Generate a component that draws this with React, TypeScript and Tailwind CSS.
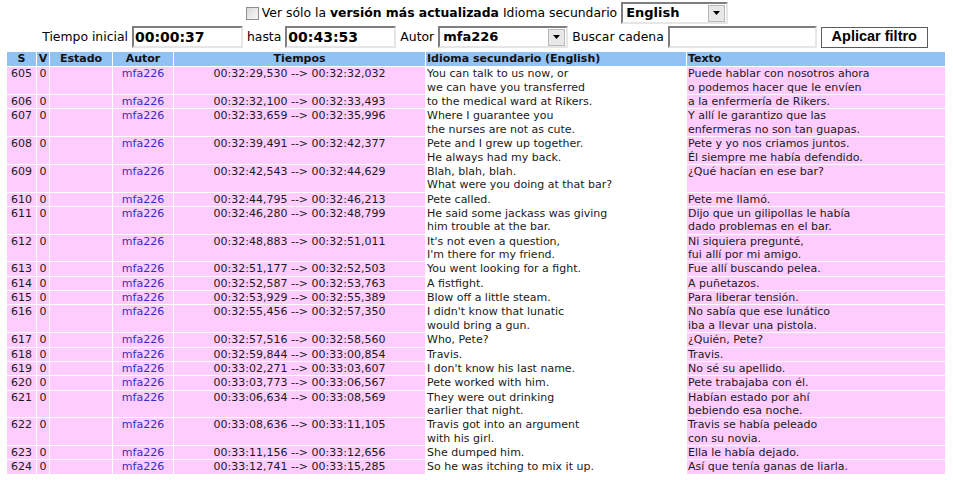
import React from "react";

type Row = { s: string; t: string; en: string[]; es: string[] };

const rows: Row[] = [
  { s: "605", t: "00:32:29,530 --> 00:32:32,032", en: ["You can talk to us now, or", "we can have you transferred"], es: ["Puede hablar con nosotros ahora", "o podemos hacer que le envíen"] },
  { s: "606", t: "00:32:32,100 --> 00:32:33,493", en: ["to the medical ward at Rikers."], es: ["a la enfermería de Rikers."] },
  { s: "607", t: "00:32:33,659 --> 00:32:35,996", en: ["Where I guarantee you", "the nurses are not as cute."], es: ["Y allí le garantizo que las", "enfermeras no son tan guapas."] },
  { s: "608", t: "00:32:39,491 --> 00:32:42,377", en: ["Pete and I grew up together.", "He always had my back."], es: ["Pete y yo nos criamos juntos.", "Él siempre me había defendido."] },
  { s: "609", t: "00:32:42,543 --> 00:32:44,629", en: ["Blah, blah, blah.", "What were you doing at that bar?"], es: ["¿Qué hacían en ese bar?"] },
  { s: "610", t: "00:32:44,795 --> 00:32:46,213", en: ["Pete called."], es: ["Pete me llamó."] },
  { s: "611", t: "00:32:46,280 --> 00:32:48,799", en: ["He said some jackass was giving", "him trouble at the bar."], es: ["Dijo que un gilipollas le había", "dado problemas en el bar."] },
  { s: "612", t: "00:32:48,883 --> 00:32:51,011", en: ["It's not even a question,", "I'm there for my friend."], es: ["Ni siquiera pregunté,", "fui allí por mi amigo."] },
  { s: "613", t: "00:32:51,177 --> 00:32:52,503", en: ["You went looking for a fight."], es: ["Fue allí buscando pelea."] },
  { s: "614", t: "00:32:52,587 --> 00:32:53,763", en: ["A fistfight."], es: ["A puñetazos."] },
  { s: "615", t: "00:32:53,929 --> 00:32:55,389", en: ["Blow off a little steam."], es: ["Para liberar tensión."] },
  { s: "616", t: "00:32:55,456 --> 00:32:57,350", en: ["I didn't know that lunatic", "would bring a gun."], es: ["No sabía que ese lunático", "iba a llevar una pistola."] },
  { s: "617", t: "00:32:57,516 --> 00:32:58,560", en: ["Who, Pete?"], es: ["¿Quién, Pete?"] },
  { s: "618", t: "00:32:59,844 --> 00:33:00,854", en: ["Travis."], es: ["Travis."] },
  { s: "619", t: "00:33:02,271 --> 00:33:03,607", en: ["I don't know his last name."], es: ["No sé su apellido."] },
  { s: "620", t: "00:33:03,773 --> 00:33:06,567", en: ["Pete worked with him."], es: ["Pete trabajaba con él."] },
  { s: "621", t: "00:33:06,634 --> 00:33:08,569", en: ["They were out drinking", "earlier that night."], es: ["Habían estado por ahí", "bebiendo esa noche."] },
  { s: "622", t: "00:33:08,636 --> 00:33:11,105", en: ["Travis got into an argument", "with his girl."], es: ["Travis se había peleado", "con su novia."] },
  { s: "623", t: "00:33:11,156 --> 00:33:12,656", en: ["She dumped him."], es: ["Ella le había dejado."] },
  { s: "624", t: "00:33:12,741 --> 00:33:15,285", en: ["So he was itching to mix it up."], es: ["Así que tenía ganas de liarla."] },
];

function Lines({ lines }: { lines: string[] }) {
  return (
    <>
      {lines.map((l, i) => (
        <div key={i} className="whitespace-nowrap">
          {l}
        </div>
      ))}
    </>
  );
}

function Arrow() {
  return (
    <span className="flex h-[17px] w-[17px] items-center justify-center border border-[#b9b9b9] bg-[#e8e8e8]">
      <svg width="7" height="4" viewBox="0 0 7 4">
        <polygon points="0,0 7,0 3.5,4" fill="#000" />
      </svg>
    </span>
  );
}

function FakeSelect({ value, width }: { value: string; width: string }) {
  return (
    <span
      className={`flex h-[22px] ${width} items-center justify-between border-2 border-t-[#7f7f7f] border-l-[#7f7f7f] border-b-[#e6e6e6] border-r-[#e6e6e6] bg-white pl-[3px] pr-px`}
    >
      <span className="text-[13px] font-bold text-black">{value}</span>
      <Arrow />
    </span>
  );
}

function FakeInput({ value, width }: { value: string; width: string }) {
  return (
    <span
      className={`flex h-[22px] ${width} items-center border-2 border-t-[#7f7f7f] border-l-[#7f7f7f] border-b-[#e6e6e6] border-r-[#e6e6e6] bg-white pl-[1px]`}
    >
      <span className="text-[14px] font-bold text-black">{value}</span>
    </span>
  );
}

export default function App() {
  const td = "px-px align-top bg-[#ffccff]";
  const th = "px-px pb-px";
  return (
    <div className="w-[953px] h-[480px] overflow-hidden bg-white font-['DejaVu_Sans',Verdana,sans-serif] text-[#1a1a1a]">
      {/* Row 1 */}
      <div className="mt-[2px] flex h-[22px] items-center justify-center pl-[21px] text-[12.4px] text-black">
        <span className="mr-[3px] h-[13px] w-[13px] border border-[#8e8e8e] bg-gradient-to-br from-[#d8d8d8] to-[#fbfbfb]" />
        <span className="whitespace-pre">
          Ver sólo la <b>versión más actualizada</b> Idioma secundario{" "}
        </span>
        <FakeSelect value="English" width="w-[107px]" />
      </div>
      {/* Row 2 */}
      <div className="mt-[2px] flex h-[22px] items-center justify-center gap-[4px] pl-[17px] text-[12.4px] text-black">
        <span>Tiempo inicial</span>
        <FakeInput value="00:00:37" width="w-[111px]" />
        <span>hasta</span>
        <FakeInput value="00:43:53" width="w-[111px]" />
        <span>Autor</span>
        <FakeSelect value="mfa226" width="w-[130px]" />
        <span>Buscar cadena</span>
        <FakeInput value="" width="w-[149px]" />
        <span className="flex h-[21px] w-[107px] items-center justify-center border border-[#5c5c5c] bg-white font-['Liberation_Sans',Arial,sans-serif] text-[14.5px] font-bold text-black">
          Aplicar filtro
        </span>
      </div>
      {/* Table */}
      <table className="ml-[6px] mt-[3px] w-[940px] table-fixed border-separate border-spacing-px text-[11px] leading-[13.36px]">
        <colgroup>
          <col className="w-[29px]" />
          <col className="w-[12px]" />
          <col className="w-[62px]" />
          <col className="w-[60px]" />
          <col className="w-[251px]" />
          <col className="w-[260px]" />
          <col className="w-[258px]" />
        </colgroup>
        <thead>
          <tr className="bg-[#92c1f3] font-bold text-[#111]">
            <th className={`${th} text-center`}>S</th>
            <th className={`${th} text-center`}>V</th>
            <th className={`${th} text-center`}>Estado</th>
            <th className={`${th} text-center`}>Autor</th>
            <th className={`${th} text-center`}>Tiempos</th>
            <th className={`${th} text-left whitespace-nowrap`}>Idioma secundario (English)</th>
            <th className={`${th} text-left`}>Texto</th>
          </tr>
        </thead>
        <tbody>
          {rows.map((r) => (
            <tr key={r.s}>
              <td className={`${td} text-center`}>{r.s}</td>
              <td className={`${td} text-center`}>0</td>
              <td className={td}></td>
              <td className={`${td} text-center text-[#2f2fc8]`}>mfa226</td>
              <td className={`${td} text-center whitespace-nowrap`}>{r.t}</td>
              <td className="px-px align-top bg-white">
                <Lines lines={r.en} />
              </td>
              <td className={td}>
                <Lines lines={r.es} />
              </td>
            </tr>
          ))}
        </tbody>
      </table>
    </div>
  );
}
